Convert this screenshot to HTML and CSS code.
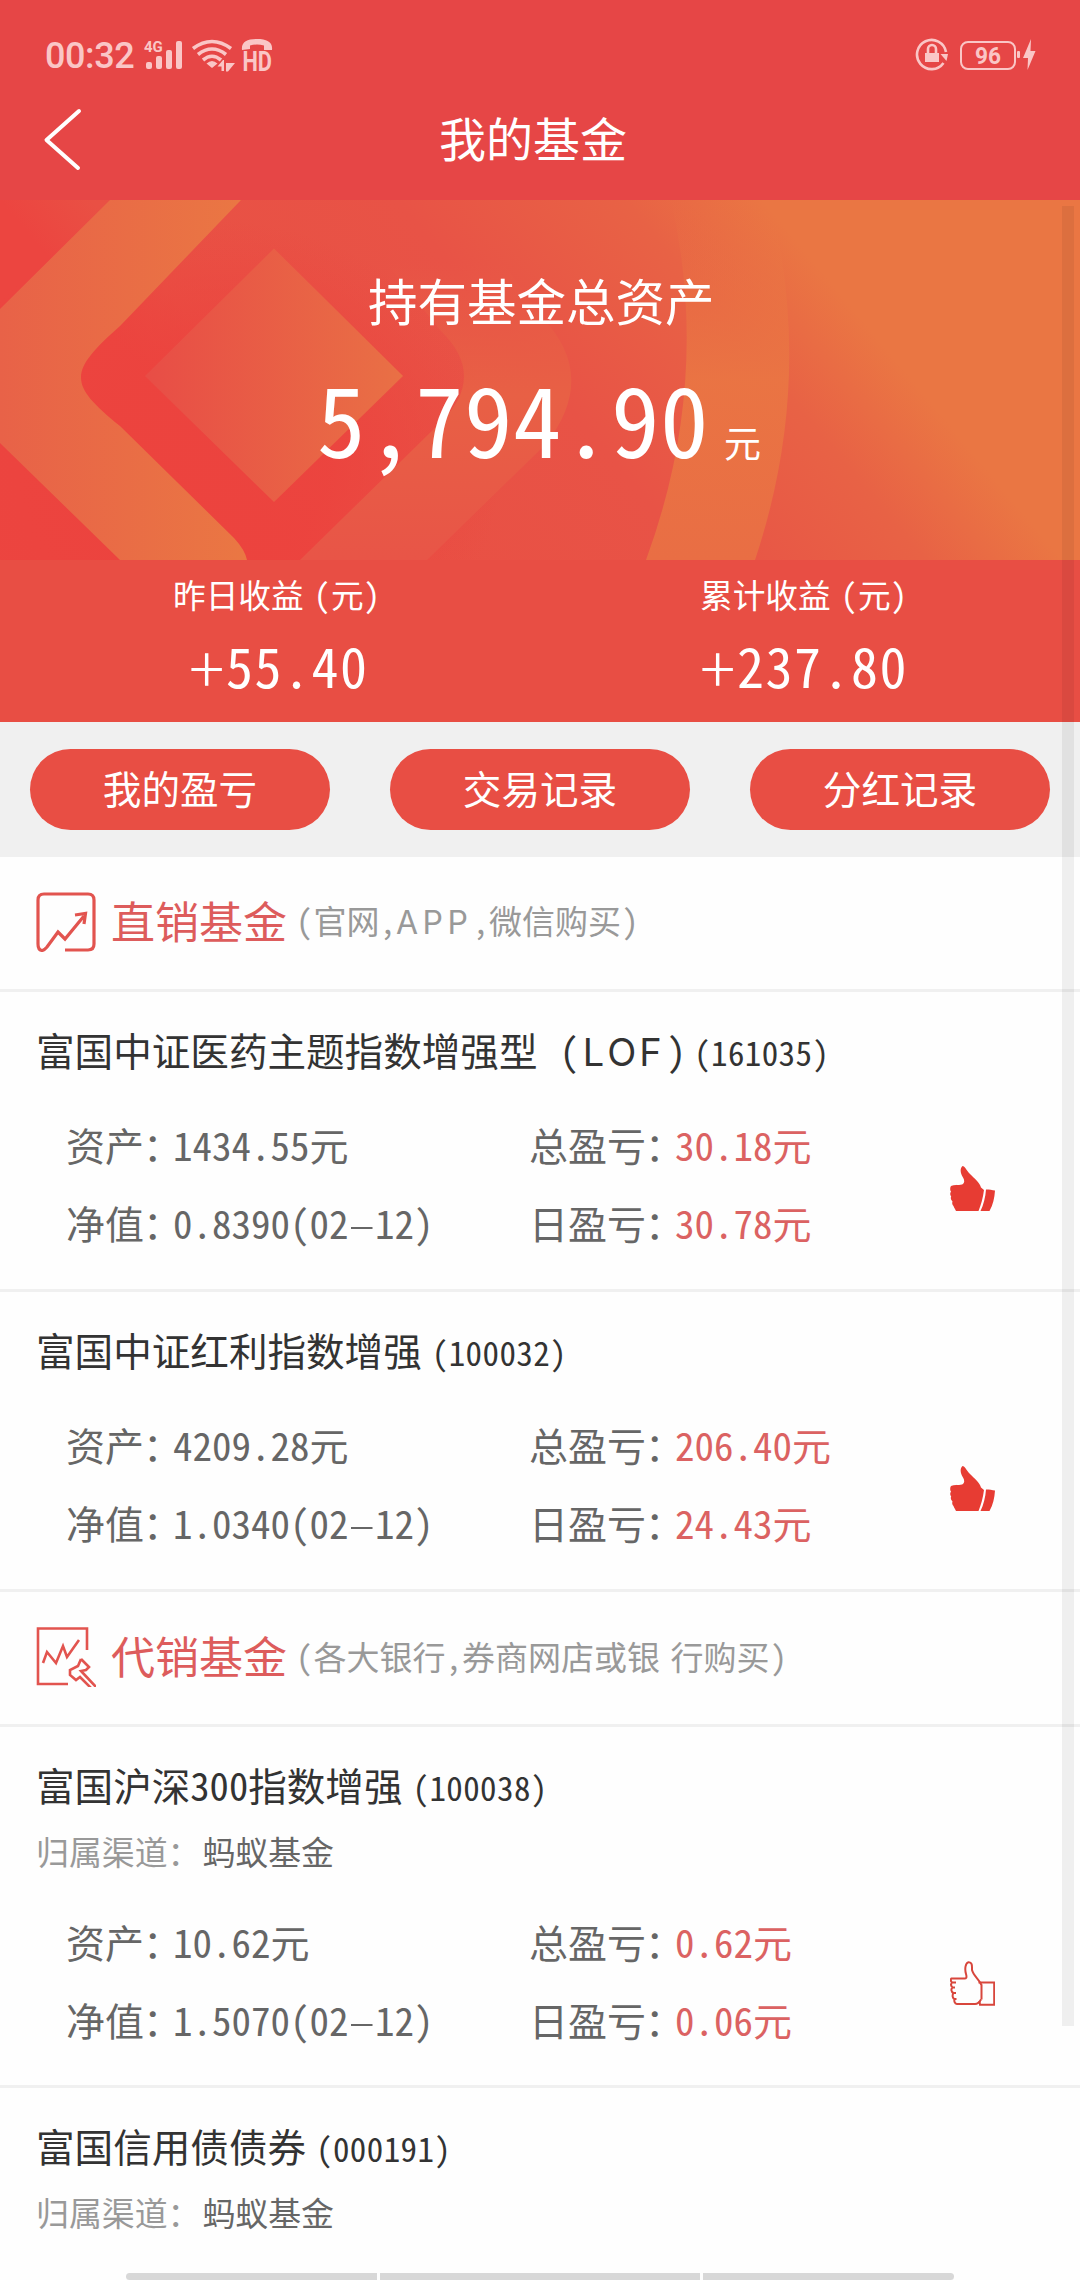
FILE: index.html
```html
<!DOCTYPE html>
<html lang="zh-CN">
<head>
<meta charset="utf-8">
<title>我的基金</title>
<link rel="stylesheet" href="styles.css">
</head>
<body>
<svg class="defs" aria-hidden="true">
  <symbol id="thumb-solid" viewBox="0 0 45 45">
    <path d="M12.5 0C15 0 16 4 20 8C24 12 30 17 31 21.5L34 24C33 32 31 39 28.500 45H6C5 43 4 41.500 3.500 40C2 38.500 2 36.500 2.500 35.500C.8 34 .4 32 1.200 30.500C-.2 29 0 27 1 25.500C-.2 24 0 21.500 1 20C4 18.500 8 19.500 12 18.500C15 17 14.500 14 13 11.500C10.500 8 9.500 2.500 12.500 0Z"/>
    <path d="M36 23.500C39 23.500 42.500 24 45 24.500C44.500 32 43 39 39.500 45H30.500C33.500 39 35.500 31 36 23.500Z"/>
  </symbol>
  <symbol id="thumb-line" viewBox="0 0 45 45">
    <path d="M31 38.500C29 42 27 43 25 43H7C4.500 42.500 4 40 4.500 38H6.500M4.500 38C2.500 37.500 2 34 3.500 32H6M3.500 32C1 31 .8 28 2.500 26.500H5M2.500 26.500C.8 25 .8 23 2 21.500H6M2 21.500C.5 20 .5 18 1.500 17.500H13.500C16.500 18 17 16.500 16 13C14.500 8 15.500 1.500 18.500 1.200C22.500 1 22 5 22 9C23.500 15 29 18 31.500 24V38.500"/>
    <path d="M28.500 21.500H44.200V43.800H30L29.500 40"/>
  </symbol>
</svg>

<header class="top">
  <div class="status">
    <span class="clock">00:32</span>
    <svg class="signals" width="134" height="40" viewBox="0 -4 134 40">
      <g fill="#fac6c6">
        <text x="0" y="14" class="net">4G</text>
        <rect x="2" y="24" width="6" height="7" rx="2"/>
        <rect x="12" y="18" width="6" height="13" rx="2"/>
        <rect x="22" y="12" width="6" height="19" rx="2"/>
        <rect x="32" y="3" width="6" height="28" rx="2"/>
        <path d="M68 30L62.500 25.500Q68 20.500 73.500 25.500Z"/>
        <path d="M80 22V33H77.500V28.500H73.500L79 22Z M82 22V25H91L84 33.500H82Z"/>
        <path d="M98 12C97 4 103 1 113 1S129 4 128 12H120V7.500Q113 5.500 106 7.500V11Z"/>
        <text x="98.500" y="32.500" class="hd" textLength="29.500" lengthAdjust="spacingAndGlyphs">HD</text>
      </g>
      <g fill="none" stroke="#fac6c6" stroke-width="3.600">
        <path d="M49 10.500Q68-3.500 87 10.500"/>
        <path d="M54 16.500Q68 5.500 82 16.500"/>
        <path d="M59 22Q68 14.500 77 22"/>
      </g>
    </svg>
    <svg class="power" width="122" height="36" viewBox="0 0 122 36">
      <g fill="none" stroke="#fac6c6">
        <path d="M28.500 25A14.600 14.600 0 1 1 31 14" stroke-width="2.600"/>
        <path d="M13 16V11A4 4 0 0 1 21 11V16" stroke-width="2.600"/>
        <rect x="46" y="4" width="54" height="27" rx="7" stroke-width="2"/>
      </g>
      <g fill="#fac6c6">
        <rect x="10" y="15" width="14" height="9"/>
        <path d="M25.500 16H33L31.500 23Z"/>
        <text x="60" y="26" class="level" textLength="26" lengthAdjust="spacingAndGlyphs">96</text>
        <rect x="102" y="13" width="3" height="7" rx="1"/>
        <path d="M116 1L108 20H113L112.500 32L120.500 13H115.500Z"/>
      </g>
    </svg>
  </div>
  <div class="nav">
    <svg class="back" width="40" height="64" viewBox="0 0 40 64"><path d="M37 3L4.500 32L36 60" fill="none" stroke="#fff" stroke-width="4" stroke-linecap="round" stroke-linejoin="round"/></svg>
    <h1>我的基金</h1>
  </div>
</header>

<section class="hero">
  <svg class="art" width="1080" height="360" viewBox="0 0 1080 360">
    <defs>
      <linearGradient id="bg" gradientUnits="userSpaceOnUse" x1="0" y1="0" x2="450" y2="-375">
        <stop offset="0" stop-color="#ec4540"/><stop offset=".12" stop-color="#e95044"/><stop offset=".52" stop-color="#e85346"/><stop offset=".82" stop-color="#e86245"/><stop offset="1" stop-color="#ea7643"/>
      </linearGradient>
      <linearGradient id="band" gradientUnits="userSpaceOnUse" x1="0" y1="0" x2="246" y2="0">
        <stop offset="0" stop-color="#e86248"/><stop offset="1" stop-color="#ea7743"/>
      </linearGradient>
      <linearGradient id="gem" x1="0" x2="1"><stop offset="0" stop-color="#e84d46"/><stop offset="1" stop-color="#e97045"/></linearGradient>
      <linearGradient id="ring" gradientUnits="userSpaceOnUse" x1="400" y1="30" x2="400" y2="360">
        <stop offset=".1" stop-color="#e86045" stop-opacity="0"/><stop offset=".5" stop-color="#e86045"/><stop offset="1" stop-color="#e85547"/>
      </linearGradient>
      <linearGradient id="arc" gradientUnits="userSpaceOnUse" x1="0" x2="0" y1="0" y2="360">
        <stop offset="0" stop-color="#ea7643" stop-opacity="0"/><stop offset=".5" stop-color="#ea7643" stop-opacity=".9"/><stop offset="1" stop-color="#e96e44"/>
      </linearGradient>
      <radialGradient id="glow" gradientUnits="userSpaceOnUse" cx="0" cy="0" r="1" gradientTransform="translate(210 270) scale(290 250)">
        <stop offset=".4" stop-color="#ec433e" stop-opacity=".9"/><stop offset="1" stop-color="#ec433e" stop-opacity="0"/>
      </radialGradient>
    </defs>
    <rect width="1080" height="360" fill="url(#bg)"/>
    <rect width="1080" height="360" fill="url(#glow)"/>
    <path d="M671 0H770Q815 180 755 360H646Q712 180 671 0Z" fill="url(#arc)"/>
    <path d="M360 30H480L540 115Q600 176 545 245L427 360L300 360L440 223Q488 176 440 130Z" fill="url(#ring)"/>
    <path d="M110 0H241L120 126C68 172 68 184 120 226L234 338Q245 350 247 360H120L0 243V109Z" fill="url(#band)"/>
    <path d="M274 48.500L403 176L274 302L145 176Z" fill="url(#gem)"/>
  </svg>
  <div class="total">
    <h2>持有基金总资产</h2>
    <p><b>5,794.90</b><span>元</span></p>
  </div>
</section>

<section class="stats">
  <div class="stat"><p>昨日收益<i class="open">（</i>元）</p><strong><i>+</i>55.40</strong></div>
  <div class="stat second"><p>累计收益<i class="open">（</i>元）</p><strong><i>+</i>237.80</strong></div>
</section>

<nav class="actions"><a>我的盈亏</a><a>交易记录</a><a>分红记录</a></nav>

<main>
  <div class="group">
    <svg width="60" height="60" viewBox="0 0 60 60" fill="none" stroke="#e2544f" stroke-width="3.200">
      <path d="M29 58H52Q58 58 58 52V8Q58 2 52 2H8Q2 2 2 8V52Q2 58 6 58.500Q8 58.500 11 55L22 40L29 47L48 24"/>
      <path d="M39 23L49.500 21.500L48 32" />
    </svg>
    <h3>直销基金</h3><p><i class="open">（</i>官网,<span class="latin">APP</span>,微信购买<i class="close">）</i></p>
  </div>

  <article class="fund">
    <h4>富国中证医药主题指数增强型<i class="lof-open">（</i><span class="lof">LOF</span><i class="lof-close">）</i><small><i>（</i>161035）</small></h4>
    <div class="body">
      <dl><dt>资产<i>：</i></dt><dd>1434.55元</dd><dt>净值<i>：</i></dt><dd>0.8390(02<u>-</u>12)</dd></dl>
      <dl class="gain"><dt>总盈亏<i>：</i></dt><dd>30.18元</dd><dt>日盈亏<i>：</i></dt><dd>30.78元</dd></dl>
      <svg class="thumb solid"><use href="#thumb-solid"/></svg>
    </div>
  </article>

  <article class="fund">
    <h4>富国中证红利指数增强<small><i>（</i>100032）</small></h4>
    <div class="body">
      <dl><dt>资产<i>：</i></dt><dd>4209.28元</dd><dt>净值<i>：</i></dt><dd>1.0340(02<u>-</u>12)</dd></dl>
      <dl class="gain"><dt>总盈亏<i>：</i></dt><dd>206.40元</dd><dt>日盈亏<i>：</i></dt><dd>24.43元</dd></dl>
      <svg class="thumb solid"><use href="#thumb-solid"/></svg>
    </div>
  </article>

  <div class="group">
    <svg width="60" height="60" viewBox="0 0 60 60" fill="none" stroke="#e2544f" stroke-width="2.600">
      <path d="M32 57H2V1.500H51V23"/>
      <path d="M7 36L11 25L20 36L27 19L31 30L43 13"/>
      <path d="M45 32L53 40L50 43L45 44L60 60M45 32L42 39L34 43L34 48L40 53L44 50L55 61"/>
    </svg>
    <h3>代销基金</h3><p><i class="open">（</i>各大银行,券商网店或银 行购买<i class="close">）</i></p>
  </div>

  <article class="fund">
    <h4>富国沪深300指数增强<small><i>（</i>100038）</small></h4>
    <p class="channel">归属渠道：<span>蚂蚁基金</span></p>
    <div class="body">
      <dl><dt>资产<i>：</i></dt><dd>10.62元</dd><dt>净值<i>：</i></dt><dd>1.5070(02<u>-</u>12)</dd></dl>
      <dl class="gain"><dt>总盈亏<i>：</i></dt><dd>0.62元</dd><dt>日盈亏<i>：</i></dt><dd>0.06元</dd></dl>
      <svg class="thumb line"><use href="#thumb-line"/></svg>
    </div>
  </article>

  <article class="fund">
    <h4>富国信用债债券<small><i>（</i>000191）</small></h4>
    <p class="channel">归属渠道：<span>蚂蚁基金</span></p>
  </article>
</main>

<div class="scrollbar"></div>
<div class="gestures"><span></span><span class="mid"></span><span></span></div>
</body>
</html>
```

FILE: styles.css
```css
* { box-sizing: border-box; margin: 0; padding: 0; }

body {
  position: relative;
  width: 1080px;
  height: 2280px;
  overflow: hidden;
  background: #fefefe;
  color: #333;
  font-family: "Noto Sans CJK SC", sans-serif;
  font-size: 39px;
  font-weight: 400;
  font-feature-settings: "hwid";
  font-kerning: none;
  white-space: nowrap;
}

h1, h2, h3, h4, b, strong { font-weight: 400; }
i { font-style: normal; }
svg { display: block; flex: none; }
.defs { position: absolute; width: 0; height: 0; }

/* Status bar and title */
.top { height: 200px; background: #e64646; color: #fff; }
.status { display: flex; height: 112px; padding: 0 43px 0 45px; align-items: center; }
.clock { width: 97px; color: #fac6c6; font: 500 36px/44px Roboto, sans-serif; font-feature-settings: normal; letter-spacing: -.4px; }
.signals { margin: -4px 0 0 2px; overflow: visible; }
.power { margin-left: auto; }
.net { font: 700 15px Roboto, sans-serif; }
.hd { font: 700 27px Roboto, sans-serif; }
.level { font: 700 24px Roboto, sans-serif; }
.nav { display: flex; height: 56px; padding: 0 42px; align-items: center; }
.nav h1 { margin: -6px 0 0 357px; font-size: 47px; line-height: 56px; }

/* Total assets */
.hero { display: grid; height: 360px; color: #fff; }
.art, .total { grid-area: 1 / 1; }
.total { padding-top: 64px; }
.total h2 { padding-left: 368px; font-size: 49.500px; line-height: 72px; }
.total p { display: flex; height: 130px; padding: 15px 0 0 317px; align-items: baseline; line-height: 130px; }
.total b { font-size: 97px; letter-spacing: .5px; }
.total span { margin-left: 15px; font-size: 37px; }

.stats { display: flex; height: 162px; background: #e84e44; color: #fff; }
.stat { width: 526px; padding: 10px 0 0 173px; }
.second { padding-left: 174px; }
.stat p { font-size: 32.700px; line-height: 48px; }
.open { margin: 0 1px 0 10px; }
.stat strong { display: flex; align-items: center; margin-top: 17px; padding-left: 16px; font-size: 54px; line-height: 60px; letter-spacing: 1.500px; }
.stat strong i { width: 37px; font-size: 66px; font-weight: 300; font-feature-settings: normal; }
.second strong { padding-left: 0; }

.actions { display: flex; justify-content: space-between; height: 135px; padding: 27px 30px; background: #f0f0f0; color: #fff; }
.actions a { width: 300px; height: 81px; border-radius: 40.500px; background: #e84e44; font-size: 38.600px; line-height: 77px; text-align: center; }

/* Fund groups */
.group { display: flex; height: 135px; padding: 0 36px 3px; align-items: center; border-bottom: 3px solid #f0f0f0; }
.group h3 { width: 176px; margin: -4px 0 0 15px; color: #dd5c5c; font-size: 44px; line-height: 60px; }
.group p { margin: -1px 0 0 -1px; color: #999; font-size: 33px; line-height: 48px; word-spacing: -6px; }
.close { margin-left: 1px; }
.latin { font-family: Inter, sans-serif; font-size: 32px; letter-spacing: 4.500px; font-feature-settings: normal; }

.fund { height: 300px; padding: 29px 0 0 36px; border-bottom: 3px solid #f0f0f0; }
.fund:has(.channel) { height: 361px; }
.fund:last-child { height: 185px; border-bottom: 0; }
.fund h4 { font-size: 38.600px; line-height: 56px; }
.fund small { font-size: 33px; letter-spacing: .4px; }
.fund small i { margin-left: 10px; }
.lof-open { margin: 0 4px 0 22px; }
.lof { font-family: Inter, sans-serif; font-size: 38px; letter-spacing: 3px; font-feature-settings: normal; }
.lof-close { margin: 0 -2px 0 2px; }
.channel { padding-top: 15px; color: #999; font-size: 32.900px; line-height: 42px; }
.channel span { margin-left: 2px; color: #666; }
.body { display: flex; padding: 27px 0 0 30px; }
.channel + .body { padding-top: 32px; }
.body dl { display: grid; grid-template-columns: 107px 1fr; grid-auto-rows: 78px; width: 463px; height: 156px; color: #666; font-size: 39px; line-height: 74px; }
.body dt i { margin-left: -1px; font-feature-settings: "halt"; }
.body .gain { grid-template-columns: 146px 1fr; width: 421px; }
.gain dd { color: #db6262; }
.body u { display: inline-block; margin: 0 3.500px; text-decoration: none; transform: scaleX(2); font-weight: 300; }
.thumb { width: 45px; height: 45px; margin-top: 59px; fill: #e73c33; }
.line { margin-top: 57px; fill: none; stroke: #d8463c; stroke-width: 2; }

/* Overlays */
.scrollbar { position: absolute; top: 206px; left: 1062px; width: 12px; height: 1820px; background: rgba(0, 0, 0, .06); }
.gestures { position: absolute; bottom: 0; left: 126px; display: flex; gap: 3px; height: 7px; }
.gestures span { width: 251px; background: #d8d8d8; }
.gestures .mid { width: 320px; }
.gestures span:first-child { border-radius: 4px 0 0 4px; }
.gestures span:last-child { border-radius: 0 4px 4px 0; }
```
